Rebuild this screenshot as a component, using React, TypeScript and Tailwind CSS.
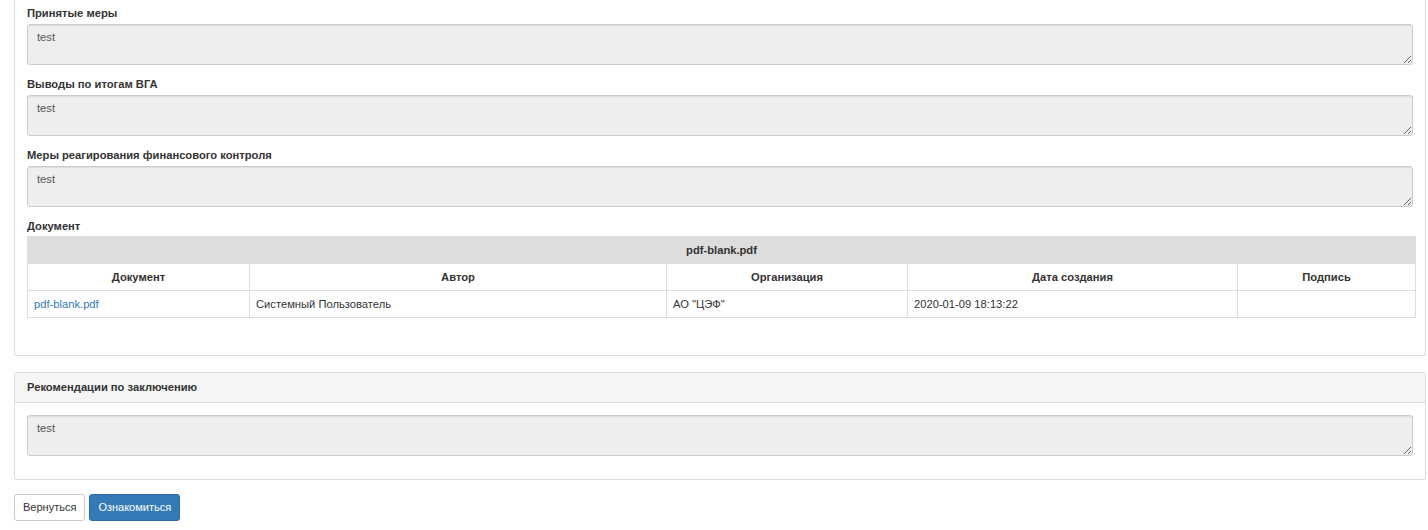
const FONT = { fontFamily: '"Liberation Sans", Arial, Helvetica, sans-serif' };

function Field({ label, value }: { label: string; value: string }) {
  return (
    <div className="mb-[12px]">
      <label className="block font-bold text-[11.2px] leading-[14px] text-[#333] mb-[4px]">{label}</label>
      <TextBox value={value} />
    </div>
  );
}

function TextBox({ value }: { value: string }) {
  return (
    <textarea
      readOnly
      value={value}
      className="block w-full h-[41px] resize-y bg-[#eee] border border-[#ccc] rounded-[3px] px-[9px] py-[4.8px] text-[11.2px] leading-[14px] text-[#555] shadow-[inset_0_1px_1px_rgba(0,0,0,0.075)] outline-none"
    />
  );
}

const COLS = [
  { title: 'Документ', w: 'w-[222px]' },
  { title: 'Автор', w: 'w-[417px]' },
  { title: 'Организация', w: 'w-[241px]' },
  { title: 'Дата создания', w: 'w-[330px]' },
  { title: 'Подпись', w: 'w-[178px]' },
];

export default function App() {
  return (
    <div className="bg-white min-h-[530px] pl-[14px] pr-[2px] text-[#333]" style={FONT}>
      {/* main panel, top cut off above the viewport */}
      <div className="border-x border-b border-[#ddd] rounded-b-[3px] bg-white px-[12px] pt-[6px] pb-[37px]">
        <Field label="Принятые меры" value="test" />
        <Field label="Выводы по итогам ВГА" value="test" />
        <Field label="Меры реагирования финансового контроля" value="test" />
        <label className="block font-bold text-[11.2px] leading-[14px] text-[#333] mb-[3px]">Документ</label>
        <table className="w-full border-collapse border border-[#ddd] text-[11.2px] table-fixed">
          <colgroup>
            {COLS.map((c) => (
              <col key={c.title} className={c.w} />
            ))}
          </colgroup>
          <thead>
            <tr className="bg-[#ddd] h-[27px]">
              <th colSpan={5} className="font-bold text-center border border-[#ddd] text-[#333]">pdf-blank.pdf</th>
            </tr>
            <tr className="h-[27px]">
              {COLS.map((c) => (
                <th key={c.title} className="font-bold text-center border border-[#ddd] px-[6px] text-[#333]">
                  {c.title}
                </th>
              ))}
            </tr>
          </thead>
          <tbody>
            <tr className="h-[27px]">
              <td className="border border-[#ddd] px-[6px]">
                <a href="#" className="text-[#337ab7]">pdf-blank.pdf</a>
              </td>
              <td className="border border-[#ddd] px-[6px]">Системный Пользователь</td>
              <td className="border border-[#ddd] px-[6px]">АО "ЦЭФ"</td>
              <td className="border border-[#ddd] px-[6px]">2020-01-09 18:13:22</td>
              <td className="border border-[#ddd] px-[6px]"></td>
            </tr>
          </tbody>
        </table>
      </div>

      {/* recommendations panel */}
      <div className="mt-[16px] border border-[#ddd] rounded-[3px] bg-white">
        <div className="bg-[#f5f5f5] border-b border-[#ddd] rounded-t-[3px] px-[12px] h-[30px] flex items-center font-bold text-[11.2px] text-[#333]">
          Рекомендации по заключению
        </div>
        <div className="px-[12px] pt-[12px] pb-[12px]">
          <div className="mb-[11px]">
            <TextBox value="test" />
          </div>
        </div>
      </div>

      <div className="mt-[14px] flex gap-[4px]">
        <button className="h-[27px] px-[8px] border border-[#ccc] rounded-[3px] bg-white text-[#333] text-[11px]">
          Вернуться
        </button>
        <button className="h-[27px] px-[8px] border border-[#2e6da4] rounded-[3px] bg-[#337ab7] text-white text-[11px]">
          Ознакомиться
        </button>
      </div>
    </div>
  );
}
